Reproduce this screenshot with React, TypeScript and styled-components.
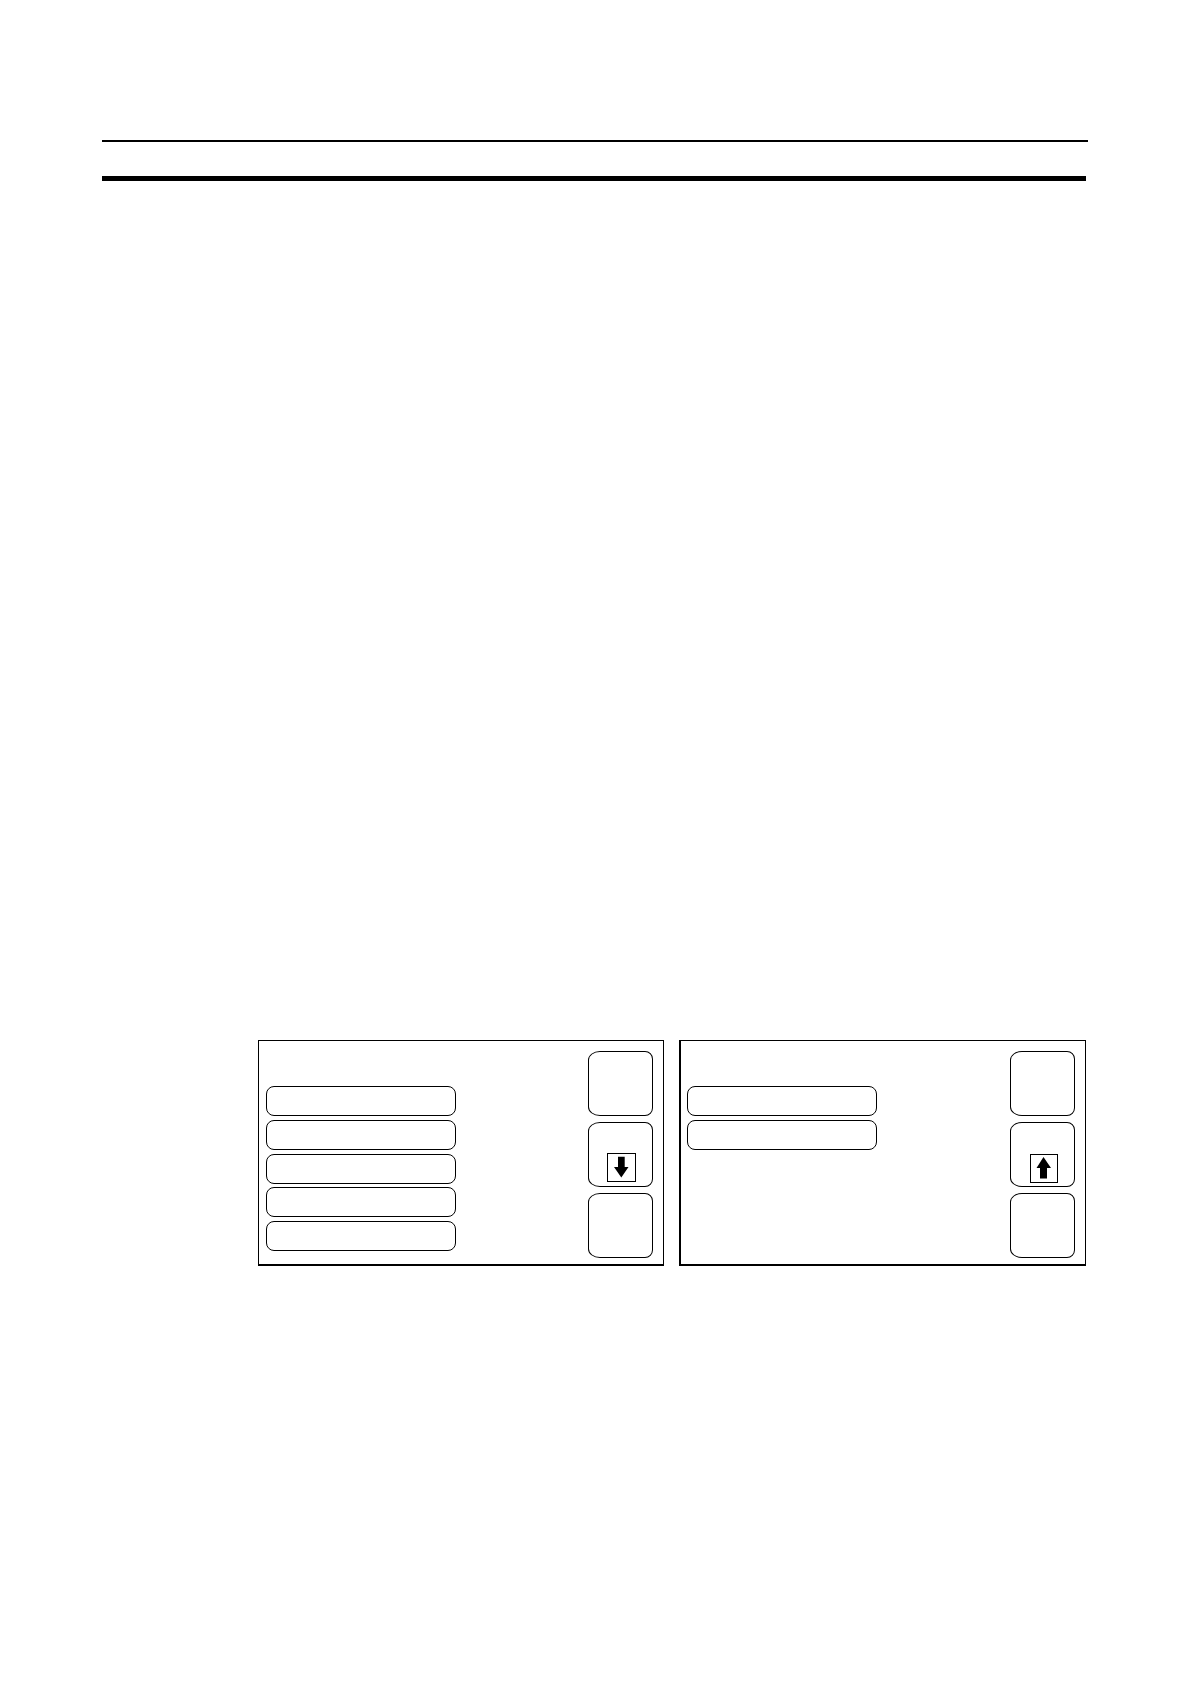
import React from "react";
import styled, { createGlobalStyle } from "styled-components";

const GlobalStyle = createGlobalStyle`
  *, *::before, *::after { box-sizing: border-box; }
  body {
    margin: 0;
    background: #fff;
    color: #000;
    font-family: "Liberation Sans", Arial, sans-serif;
  }
`;

const Page = styled.main`
  display: flex;
  flex-direction: column;
  min-height: 100vh;
  padding: 140px 102px 0;
`;

const Header = styled.header`
  display: flex;
  flex-direction: column;
  gap: 34px;
`;

const ThinRule = styled.hr`
  width: 100%;
  height: 2px;
  margin: 0;
  border: 0;
  background: #000;
`;

const ThickRule = styled(ThinRule)`
  width: auto;
  height: 5px;
  margin-right: 2px;
`;

const Screens = styled.div`
  display: grid;
  grid-template-columns: 406fr 407fr;
  gap: 15px;
  margin: 859px 2px 0 156px;
`;

const Screen = styled.section<{ $edge: number }>`
  display: flex;
  justify-content: space-between;
  border: 1px solid #000;
  border-bottom-width: 2px;
  border-left-width: ${(p) => p.$edge}px;
  padding: 10px 10px 6px ${(p) => 8 - p.$edge}px;
`;

const Options = styled.div`
  display: grid;
  grid-template-rows: repeat(5, 30px);
  align-content: space-between;
  width: 190px;
  height: 165px;
  margin-top: 35px;
`;

const Option = styled.button`
  border: 1px solid #000;
  border-radius: 8px;
  padding: 0;
  background: #fff;
`;

const Keys = styled.div`
  display: flex;
  flex-direction: column;
  gap: 6px;
`;

const Key = styled.button<{ $inset?: number }>`
  display: flex;
  align-items: flex-end;
  justify-content: flex-end;
  width: 65px;
  height: 65px;
  border: 1px solid #000;
  border-radius: 12px 8px 8px 12px / 9px 8px 8px 9px;
  padding: 0 16px ${(p) => p.$inset ?? 0}px 0;
  background: #fff;
`;

const ArrowFrame = styled.span<{ $width: number }>`
  display: block;
  width: ${(p) => p.$width}px;
  height: 29px;
  border: 1px solid #000;

  svg {
    display: block;
  }
`;

type Direction = "down" | "up";

const arrows: Record<Direction, { points: string; width: number; inset: number; label: string }> = {
  down: {
    points: "10,2.7 16.7,2.7 16.7,13 20.5,13 13.3,23.4 6,13 10,13",
    width: 29,
    inset: 4,
    label: "Page down",
  },
  up: {
    points: "12.5,2 20,13 16,13 16,23.6 9,23.6 9,13 5.5,13",
    width: 28,
    inset: 3,
    label: "Page up",
  },
};

function ArrowKey({ direction }: { direction: Direction }) {
  const { points, width, inset, label } = arrows[direction];
  return (
    <Key type="button" aria-label={label} $inset={inset}>
      <ArrowFrame $width={width}>
        <svg width={width - 2} height="27" viewBox={`0 0 ${width - 2} 27`} aria-hidden="true">
          <polygon points={points} fill="#000" />
        </svg>
      </ArrowFrame>
    </Key>
  );
}

function MenuScreen({ options, direction, edge }: { options: number; direction: Direction; edge: number }) {
  return (
    <Screen $edge={edge}>
      <Options>
        {Array.from({ length: options }, (_, i) => (
          <Option key={i} type="button" aria-label={`Option ${i + 1}`} />
        ))}
      </Options>
      <Keys>
        <Key type="button" aria-label="Top key" />
        <ArrowKey direction={direction} />
        <Key type="button" aria-label="Bottom key" />
      </Keys>
    </Screen>
  );
}

export default function App() {
  return (
    <>
      <GlobalStyle />
      <Page>
        <Header>
          <ThinRule />
          <ThickRule />
        </Header>
        <Screens>
          <MenuScreen options={5} direction="down" edge={1} />
          <MenuScreen options={2} direction="up" edge={2} />
        </Screens>
      </Page>
    </>
  );
}
